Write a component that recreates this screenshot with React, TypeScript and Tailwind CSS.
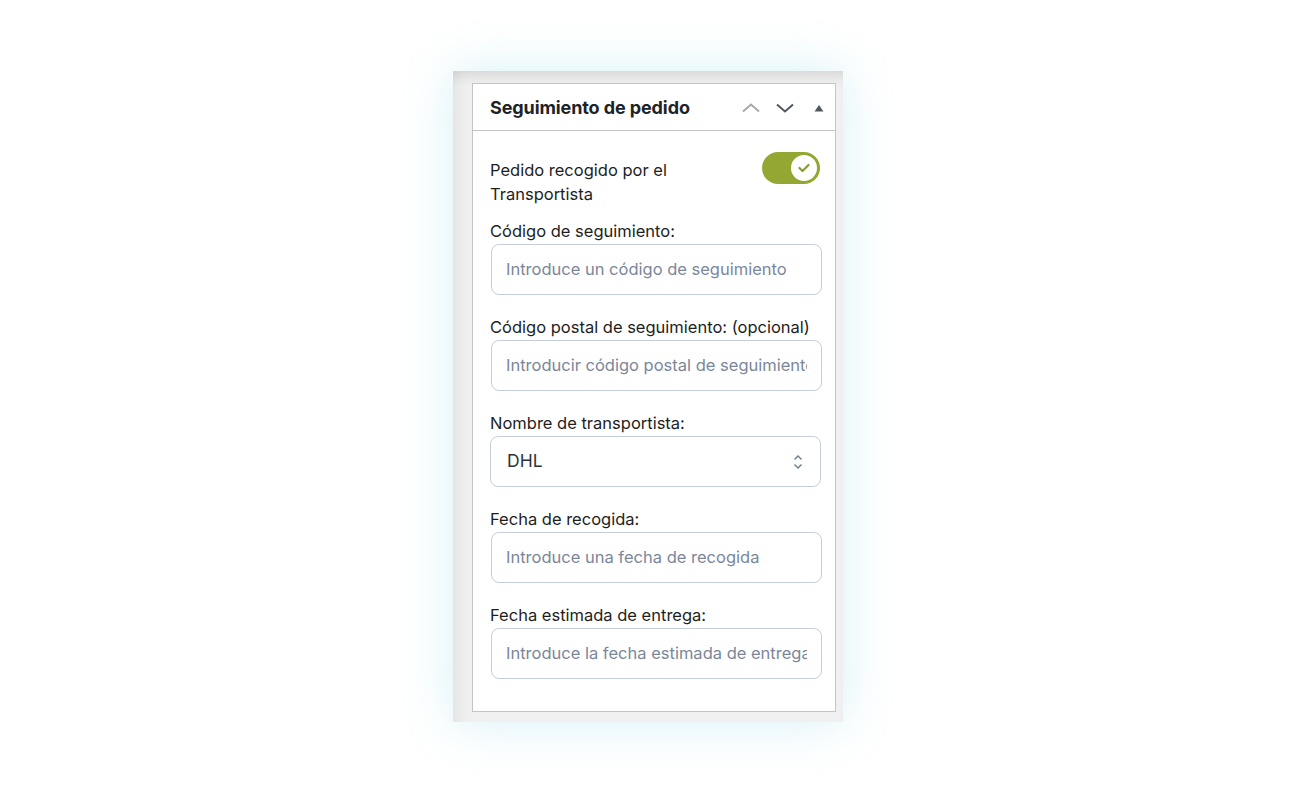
import React from "react";

function Field({ label, placeholder }: { label: string; placeholder: string }) {
  return (
    <div className="flex flex-col">
      <label className="text-[16.5px] leading-[24px] text-[#1e1e1e]">{label}</label>
      <div className="mt-px ml-px h-[51px] w-[331px] rounded-[8px] border border-[#c5cdd9] bg-white flex items-center pl-[14px] pr-[14px] overflow-hidden">
        <span className="whitespace-nowrap text-[16.5px] text-[#7b879a] overflow-hidden">{placeholder}</span>
      </div>
    </div>
  );
}

export default function App() {
  return (
    <div className="w-[1300px] h-[793px] bg-white flex justify-start pl-[453px] pt-[71px]" style={{ fontFamily: "Inter, 'Noto Sans', sans-serif" }}>
      <div className="w-[390px] h-[651px] bg-[#f0f0f1] pl-[19px] pt-[12px] pr-[7px] shadow-[0_0_45px_rgba(120,210,230,0.3),inset_0_14px_14px_-10px_rgba(0,0,0,0.12),inset_14px_0_14px_-10px_rgba(0,0,0,0.06)]">
        <div className="w-[364px] h-[629px] bg-white border border-[#c3c4c7] flex flex-col">
          <div className="h-[47px] border-b border-[#c3c4c7] flex items-center pl-[17px] pr-[10px] pt-[1px]">
            <span className="text-[18px] font-bold text-[#1d2327] tracking-[-0.1px]">Seguimiento de pedido</span>
            <div className="ml-auto flex items-center">
              <svg width="20" height="20" viewBox="0 0 20 20" className="mr-[14px]">
                <path d="M2 13.5 L10 6.5 L18 13.5" fill="none" stroke="#a7aaad" strokeWidth="2" />
              </svg>
              <svg width="20" height="20" viewBox="0 0 20 20" className="mr-[18px]">
                <path d="M2 6.5 L10 13.5 L18 6.5" fill="none" stroke="#50575e" strokeWidth="2" />
              </svg>
              <svg width="12" height="12" viewBox="0 0 12 12">
                <path d="M1.5 9.5 L6 3 L10.5 9.5 Z" fill="#50575e" />
              </svg>
            </div>
          </div>
          <div className="pl-[17px] pr-[14px] pt-[23px] flex flex-col">
            <div className="flex items-start justify-between">
              <span className="text-[16.5px] leading-[24px] text-[#1e1e1e] w-[220px] mt-[4px]">Pedido recogido por el Transportista</span>
              <div className="-mt-[2px] mr-px w-[58px] h-[32px] rounded-full bg-[#95a733] flex items-center justify-end pr-[1px]">
                <div className="w-[30px] h-[30px] rounded-full bg-white border-2 border-[#95a733] flex items-center justify-center">
                  <svg width="12" height="10" viewBox="0 0 12 10">
                    <path d="M1.5 5 L4.5 8 L10.5 2" fill="none" stroke="#8a9c2c" strokeWidth="2.2" strokeLinecap="round" strokeLinejoin="round" />
                  </svg>
                </div>
              </div>
            </div>
            <div className="mt-[13px] flex flex-col gap-[20px]">
              <Field label="Código de seguimiento:" placeholder="Introduce un código de seguimiento" />
              <Field label="Código postal de seguimiento: (opcional)" placeholder="Introducir código postal de seguimiento" />
              <div className="flex flex-col">
                <label className="text-[16.5px] leading-[24px] text-[#1e1e1e]">Nombre de transportista:</label>
                <div className="mt-px h-[51px] w-[331px] rounded-[8px] border border-[#c5cdd9] bg-white flex items-center pl-[16px] pr-[16px]">
                  <span className="text-[17.5px] text-[#2c3338]">DHL</span>
                  <svg width="12" height="18" viewBox="0 0 12 18" className="ml-auto">
                    <path d="M2.5 6.5 L6 3 L9.5 6.5" fill="none" stroke="#6b7a90" strokeWidth="1.4" />
                    <path d="M2.5 11.5 L6 15 L9.5 11.5" fill="none" stroke="#6b7a90" strokeWidth="1.4" />
                  </svg>
                </div>
              </div>
              <Field label="Fecha de recogida:" placeholder="Introduce una fecha de recogida" />
              <Field label="Fecha estimada de entrega:" placeholder="Introduce la fecha estimada de entrega" />
            </div>
          </div>
        </div>
      </div>
    </div>
  );
}
